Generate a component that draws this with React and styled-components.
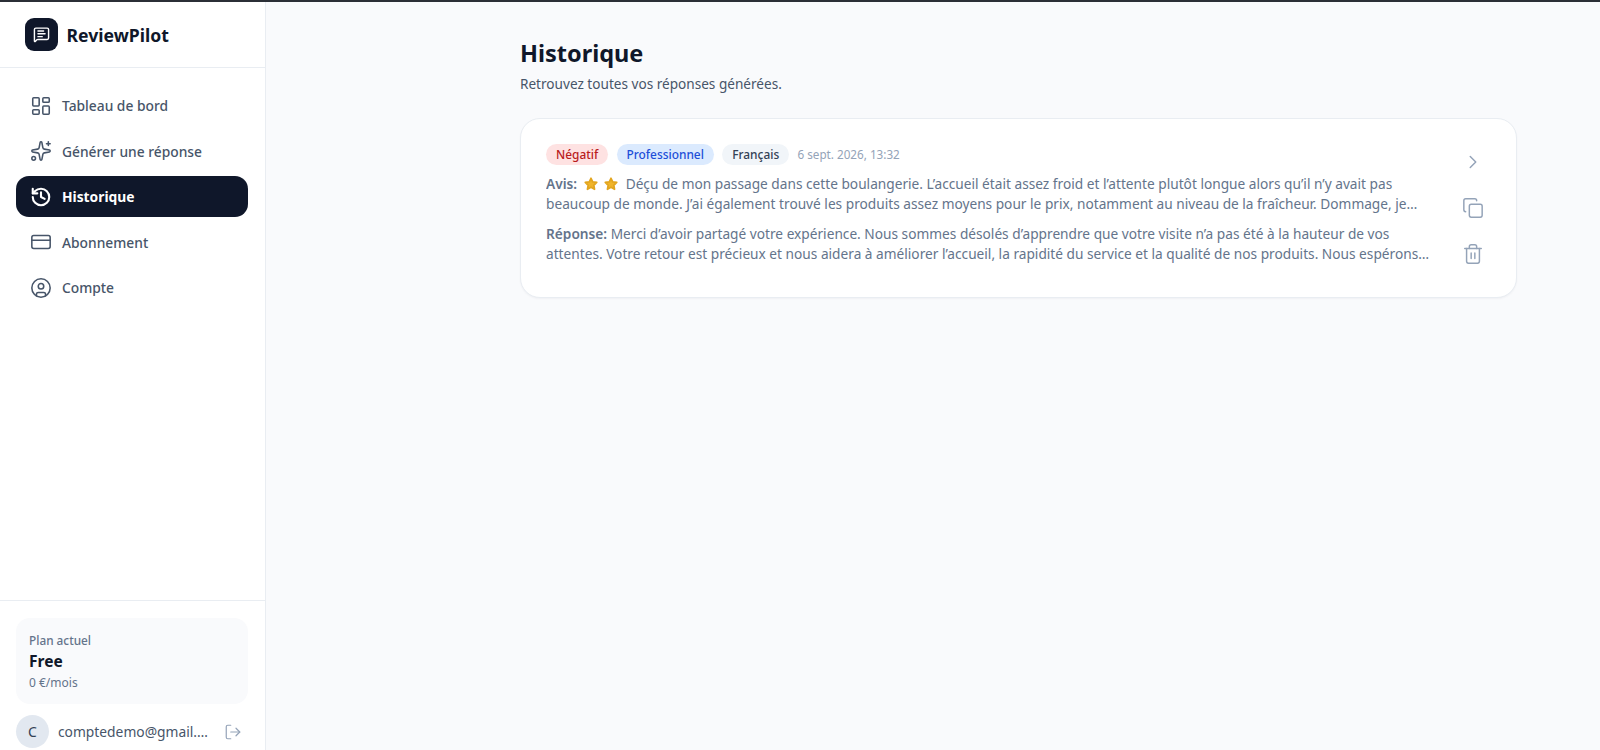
import React from 'react';
import styled, { createGlobalStyle } from 'styled-components';
import {
  LayoutDashboard,
  Sparkles,
  History,
  CreditCard,
  CircleUser,
  LogOut,
  ChevronRight,
  Copy,
  Trash2,
  MessageSquareText,
} from 'lucide-react';

const GlobalStyle = createGlobalStyle`
  html, body {
    margin: 0;
    height: 100%;
    background: #f9fafc;
    font-family: "Noto Sans", "Open Sans", sans-serif;
  }
  * { box-sizing: border-box; }
`;

const navItems = [
  { label: 'Tableau de bord', icon: LayoutDashboard },
  { label: 'Générer une réponse', icon: Sparkles },
  { label: 'Historique', icon: History, active: true },
  { label: 'Abonnement', icon: CreditCard },
  { label: 'Compte', icon: CircleUser },
];

function Star() {
  return (
    <StarIcon viewBox="0 0 24 24">
      <path d="M12 3.4l2.6 5.5 6 .8-4.4 4.2 1.1 6L12 17l-5.3 2.9 1.1-6-4.4-4.2 6-.8z" />
    </StarIcon>
  );
}

function App() {
  return (
    <Page>
      <GlobalStyle />
      <Sidebar>
        <Brand>
          <LogoBox>
            <MessageSquareText size={17} strokeWidth={2} />
          </LogoBox>
          <BrandName>ReviewPilot</BrandName>
        </Brand>
        <Nav>
          {navItems.map(({ label, icon: Icon, active }) => (
            <NavItem key={label} $active={active}>
              <Icon size={22} strokeWidth={active ? 2.3 : 1.7} />
              {label}
            </NavItem>
          ))}
        </Nav>
        <SidebarFooter>
          <PlanCard>
            <PlanLabel>Plan actuel</PlanLabel>
            <PlanName>Free</PlanName>
            <PlanPrice>0 €/mois</PlanPrice>
          </PlanCard>
          <UserRow>
            <Avatar>C</Avatar>
            <UserMail>comptedemo@gmail.com</UserMail>
            <LogOut size={18} strokeWidth={1.6} color="#94a3b8" />
          </UserRow>
        </SidebarFooter>
      </Sidebar>
      <Main>
        <Title>Historique</Title>
        <Subtitle>Retrouvez toutes vos réponses générées.</Subtitle>
        <Card>
          <CardBody>
            <Meta>
              <Badge $bg="#fee2e2" $color="#b91c1c">Négatif</Badge>
              <Badge $bg="#dbeafe" $color="#1d4ed8">Professionnel</Badge>
              <Badge $bg="#f1f5f9" $color="#334155">Français</Badge>
              <DateText>6 sept. 2026, 13:32</DateText>
            </Meta>
            <Excerpt>
              <strong>Avis:</strong>
              <Stars><Star /> <Star /></Stars>
              Déçu de mon passage dans cette boulangerie. L’accueil était assez froid et l’attente plutôt longue alors qu’il n’y avait pas beaucoup de monde. J’ai également trouvé les produits assez moyens pour le prix, notamment au niveau de la fraîcheur. Dommage, je m’attendais à mieux et je ne pense pas revenir de sitôt malgré la proximité de la boutique.
            </Excerpt>
            <Excerpt>
              <strong>Réponse:</strong> Merci d’avoir partagé votre expérience. Nous sommes désolés d’apprendre que votre visite n’a pas été à la hauteur de vos attentes. Votre retour est précieux et nous aidera à améliorer l’accueil, la rapidité du service et la qualité de nos produits. Nous espérons avoir le plaisir de vous accueillir à nouveau très prochainement.
            </Excerpt>
          </CardBody>
          <Actions>
            <ChevronRight size={22} strokeWidth={1.6} />
            <Copy size={22} strokeWidth={1.6} />
            <Trash2 size={22} strokeWidth={1.6} />
          </Actions>
        </Card>
      </Main>
    </Page>
  );
}

const Page = styled.div`
  display: flex;
  height: 750px;
  border-top: 2px solid #2b2f36;
  overflow: hidden;
`;

const Sidebar = styled.aside`
  width: 266px;
  flex-shrink: 0;
  display: flex;
  flex-direction: column;
  background: #fff;
  border-right: 1px solid #e9edf2;
`;

const Brand = styled.div`
  height: 66px;
  display: flex;
  align-items: center;
  gap: 8.5px;
  padding-left: 25px;
  border-bottom: 1px solid #e9edf2;
`;

const LogoBox = styled.div`
  width: 33px;
  height: 33px;
  border-radius: 9px;
  background: #0f172a;
  color: #fff;
  display: flex;
  align-items: center;
  justify-content: center;
`;

const BrandName = styled.span`
  font-size: 17.6px;
  font-weight: 700;
  color: #0f172a;
`;

const Nav = styled.nav`
  flex: 1;
  display: flex;
  flex-direction: column;
  gap: 4.6px;
  padding: 17px 17px 0 16px;
`;

const NavItem = styled.div`
  height: 41px;
  display: flex;
  align-items: center;
  gap: 10px;
  padding: 0 14px;
  border-radius: 13px;
  font-size: 13.8px;
  font-weight: ${(p) => (p.$active ? 700 : 500)};
  background: ${(p) => (p.$active ? '#0f172a' : 'transparent')};
  color: ${(p) => (p.$active ? '#fff' : '#475569')};
`;

const SidebarFooter = styled.div`
  padding: 17px 17px 0 16px;
  height: 150px;
  border-top: 1px solid #e9edf2;
`;

const PlanCard = styled.div`
  height: 86px;
  padding: 12.5px 13px;
  border-radius: 14px;
  background: #f9fafc;
`;

const PlanLabel = styled.div`
  font-size: 11.8px;
  font-weight: 500;
  line-height: 18px;
  color: #64748b;
`;

const PlanName = styled.div`
  font-size: 15.5px;
  font-weight: 700;
  line-height: 24px;
  color: #0f172a;
`;

const PlanPrice = styled.div`
  font-size: 12px;
  line-height: 19px;
  color: #64748b;
`;

const UserRow = styled.div`
  display: flex;
  align-items: center;
  margin-top: 11px;
  padding-right: 6px;
`;

const Avatar = styled.div`
  width: 33px;
  height: 33px;
  flex-shrink: 0;
  border-radius: 50%;
  background: #e2e8f0;
  color: #334155;
  font-size: 14px;
  font-weight: 400;
  display: flex;
  align-items: center;
  justify-content: center;
`;

const UserMail = styled.span`
  flex: 1;
  min-width: 0;
  margin: 0 10px 0 9px;
  font-size: 13.8px;
  color: #475569;
  white-space: nowrap;
  overflow: hidden;
  text-overflow: ellipsis;
`;

const Main = styled.main`
  flex: 1;
  min-width: 0;
  padding: 38px 83px 0 254px;
`;

const Title = styled.h1`
  margin: 0;
  font-size: 23.5px;
  line-height: 26px;
  font-weight: 700;
  color: #0f172a;
`;

const Subtitle = styled.p`
  margin: 8px 0 0;
  font-size: 13.6px;
  line-height: 20px;
  color: #475569;
`;

const Card = styled.section`
  margin-top: 23.5px;
  height: 180px;
  display: flex;
  gap: 23px;
  padding: 25px 25px 0 25px;
  background: #fff;
  border: 1px solid #e9edf2;
  border-radius: 20px;
  box-shadow: 0 1px 2px rgba(15, 23, 42, 0.04);
`;

const CardBody = styled.div`
  flex: 1;
  min-width: 0;
`;

const Meta = styled.div`
  display: flex;
  align-items: center;
  gap: 8.3px;
  height: 21px;
`;

const Badge = styled.span`
  height: 21px;
  display: inline-flex;
  align-items: center;
  padding: 0 10px;
  border-radius: 11px;
  font-size: 11.9px;
  font-weight: 500;
  background: ${(p) => p.$bg};
  color: ${(p) => p.$color};
`;

const DateText = styled.span`
  font-size: 11.7px;
  color: #94a3b8;
`;

const Excerpt = styled.p`
  margin: 9.5px 0 0;
  font-size: 13.7px;
  line-height: 20.3px;
  color: #64748b;
  display: -webkit-box;
  -webkit-box-orient: vertical;
  -webkit-line-clamp: 2;
  overflow: hidden;

  strong {
    font-weight: 600;
  }
`;

const Stars = styled.span`
  margin: 0 7px 0 6px;
`;

const StarIcon = styled.svg`
  width: 16px;
  height: 16px;
  vertical-align: -2.5px;
  fill: #f0b429;
  stroke: #e2a51f;
  stroke-width: 2.6;
  stroke-linejoin: round;
`;

const Actions = styled.div`
  width: 36px;
  flex-shrink: 0;
  display: flex;
  flex-direction: column;
  align-items: center;
  gap: 24px;
  padding-top: 7px;
  color: #94a3b8;
`;

export default App;
